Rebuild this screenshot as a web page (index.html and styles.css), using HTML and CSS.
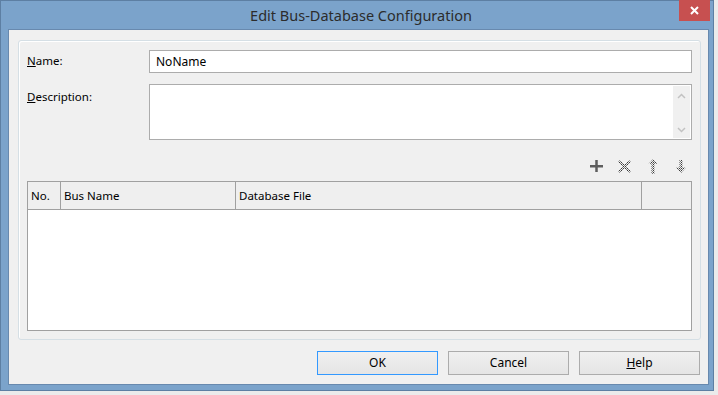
FILE: index.html
```html
<!DOCTYPE html>
<html lang="en">
<head>
    <meta charset="UTF-8">
    <title>Edit Bus-Database Configuration</title>
    <link rel="stylesheet" href="styles.css">
</head>
<body>
    <div class="window">
        <div class="titlebar">
            <span class="title">Edit Bus-Database Configuration</span>
            <div class="close">
                <svg width="9" height="9" viewBox="0 0 9 9"><path d="M1 1 L8 8 M8 1 L1 8" stroke="#fff" stroke-width="2"/></svg>
            </div>
        </div>
        <div class="client">
            <div class="group">
                <div class="row">
                    <label class="lbl"><u>N</u>ame:</label>
                    <div class="input">NoName</div>
                </div>
                <div class="row row-desc">
                    <label class="lbl"><u>D</u>escription:</label>
                    <div class="textarea">
                        <div class="vscroll">
                            <svg width="9" height="6" viewBox="0 0 9 6"><path d="M1 5 L4.5 1.5 L8 5" fill="none" stroke="#c2c2c2" stroke-width="1.5"/></svg>
                            <svg width="9" height="6" viewBox="0 0 9 6"><path d="M1 1 L4.5 4.5 L8 1" fill="none" stroke="#c2c2c2" stroke-width="1.5"/></svg>
                        </div>
                    </div>
                </div>
                <div class="toolbar">
                    <svg class="tool" width="16" height="16" viewBox="0 0 16 16">
                        <rect x="1" y="7" width="13" height="2.5" fill="#5e5e5e"/>
                        <rect x="6.25" y="2" width="2.5" height="12" fill="#5e5e5e"/>
                    </svg>
                    <svg class="tool" width="16" height="16" viewBox="0 0 16 16">
                        <defs>
                            <pattern id="dither" width="2" height="2" patternUnits="userSpaceOnUse">
                                <rect x="0" y="0" width="1" height="1" fill="#3c3c3c"/>
                                <rect x="1" y="1" width="1" height="1" fill="#7a7a7a"/>
                            </pattern>
                        </defs>
                        <path d="M2 3 L13 14 M13 3 L2 14" stroke="url(#dither)" stroke-width="3"/>
                    </svg>
                    <svg class="tool" width="16" height="16" viewBox="0 0 16 16">
                        <path d="M8 1 L12.5 6 L9.5 6 L9.5 16 L6.5 16 L6.5 6 L3.5 6 Z" fill="url(#dither)"/>
                    </svg>
                    <svg class="tool" width="16" height="16" viewBox="0 0 16 16">
                        <path d="M8 15 L13 9.5 L9.5 9.5 L9.5 2 L6.5 2 L6.5 9.5 L3 9.5 Z" fill="url(#dither)"/>
                    </svg>
                </div>
                <div class="grid">
                    <div class="grid-head">
                        <div class="col col-no">No.</div>
                        <div class="col col-bus">Bus Name</div>
                        <div class="col col-db">Database File</div>
                        <div class="col col-end"></div>
                    </div>
                    <div class="grid-body"></div>
                </div>
            </div>
            <div class="buttons">
                <div class="btn btn-default">OK</div>
                <div class="btn">Cancel</div>
                <div class="btn"><u>H</u>elp</div>
            </div>
        </div>
    </div>
</body>
</html>
```

FILE: styles.css
```css
body { margin: 0; background: #ebebeb; font-family: "Noto Sans", "Open Sans", sans-serif; font-size: 11.5px; color: #000; }
.window { position: relative; width: 714px; height: 391px; box-sizing: border-box; border: 1px solid #5d7fa3; background: #7ba3cb; padding: 0 4px 5px 7px; display: flex; flex-direction: column; }
.titlebar { position: relative; height: 28px; margin: 0 -4px 0 -7px; text-align: center; line-height: 28px; padding-left: 8px; }
.title { font-size: 14.5px; color: #2c2c2c; }
.close { position: absolute; top: -1px; right: 3px; width: 31px; height: 21px; background: #c75050; display: flex; align-items: center; justify-content: center; }
.close svg { display: block; }

.client { flex: 1; border: 1px solid #6889ae; background: #f0f0f0; display: flex; flex-direction: column; }
.group { margin: 10px 7px 0 9px; border: 1px solid #d5dfe5; border-radius: 3px; box-shadow: inset 1px 1px 0 #fff; padding: 9px 8px 8px 8px; }
.row { display: flex; }
.row-desc { margin-top: 11px; }
.lbl { width: 122px; flex: none; line-height: 22px; }
.row-desc .lbl { line-height: 26px; }
.input { flex: 1; height: 23px; box-sizing: border-box; border: 1px solid #acacac; background: #fff; padding: 0 6px; line-height: 21px; font-size: 12px; }
.textarea { flex: 1; height: 56px; box-sizing: border-box; border: 1px solid #acacac; background: #fff; display: flex; justify-content: flex-end; padding: 1px; }
.vscroll { width: 17px; background: #f0f0f0; display: flex; flex-direction: column; justify-content: space-between; align-items: center; padding: 7px 0 5px; }
.vscroll svg { display: block; }

.toolbar { display: flex; justify-content: flex-end; gap: 12px; margin: 15px 0 4px; height: 22px; align-items: center; padding-right: 3px; }
.tool { display: block; }

.grid { height: 150px; box-sizing: border-box; border: 1px solid #a0a0a0; background: #fff; display: flex; flex-direction: column; }
.grid-head { display: flex; height: 28px; box-sizing: border-box; border-bottom: 1px solid #a0a0a0; background: #efefef; }
.col { box-sizing: border-box; border-right: 1px solid #a0a0a0; line-height: 27px; padding-left: 3px; white-space: nowrap; }
.col-no { width: 33px; }
.col-bus { width: 175px; }
.col-db { width: 406px; }
.col-end { width: 49px; border-right: 0; }
.grid-body { flex: 1; }

.buttons { display: flex; justify-content: flex-end; gap: 10px; margin-top: 11px; padding-right: 8px; }
.btn { width: 121px; height: 24px; box-sizing: border-box; border: 1px solid #acacac; background: linear-gradient(#f0f0f0, #e5e5e5); text-align: center; line-height: 22px; font-size: 12px; }
.btn-default { border-color: #3399ff; }
```
